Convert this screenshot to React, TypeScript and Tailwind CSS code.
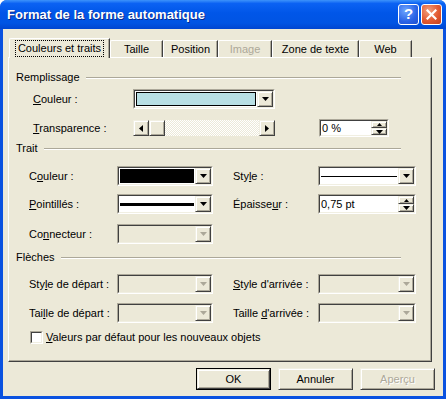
import clsx from 'clsx'
import type { ReactNode } from 'react'

const raised =
  'border border-t-[#f1efe2] border-l-[#f1efe2] border-r-[#404040] border-b-[#404040] shadow-[inset_1px_1px_#ffffff,inset_-1px_-1px_#aca899] bg-[#ece9d8]'

/**
 * Small triangle used on combo, scroll and spin buttons.
 */
function Tri({ dir, disabled = false }: { dir: 'down' | 'up' | 'left' | 'right'; disabled?: boolean }) {
  const fill = disabled ? '#aca899' : '#000000'
  if (dir === 'down')
    return (
      <svg width="7" height="4" viewBox="0 0 7 4">
        <path d="M0 0h7L3.5 4z" fill={fill} />
      </svg>
    )
  if (dir === 'up')
    return (
      <svg width="5" height="3" viewBox="0 0 5 3">
        <path d="M2.5 0L5 3H0z" fill={fill} />
      </svg>
    )
  if (dir === 'left')
    return (
      <svg width="4" height="7" viewBox="0 0 4 7">
        <path d="M4 0v7L0 3.5z" fill={fill} />
      </svg>
    )
  return (
    <svg width="4" height="7" viewBox="0 0 4 7">
      <path d="M0 0v7L4 3.5z" fill={fill} />
    </svg>
  )
}

/**
 * A sunken 3D field (edit, combo).
 */
function Sunken({
  className,
  disabled = false,
  children,
}: {
  className?: string
  disabled?: boolean
  children: ReactNode
}) {
  return (
    <div
      className={clsx(
        'flex border border-t-[#aca899] border-l-[#aca899] border-r-white border-b-white',
        className,
      )}
    >
      <div
        className={clsx(
          'flex min-w-0 flex-1 border border-t-[#404040] border-l-[#404040] border-r-[#f1efe2] border-b-[#f1efe2]',
          disabled ? 'bg-[#ece9d8]' : 'bg-white',
        )}
      >
        {children}
      </div>
    </div>
  )
}

function Combo({
  className,
  disabled = false,
  children,
}: {
  className?: string
  disabled?: boolean
  children?: ReactNode
}) {
  return (
    <Sunken className={className} disabled={disabled}>
      <div className="flex min-w-0 flex-1">{children}</div>
      <div className={clsx('flex w-[16px] items-center justify-center', raised)}>
        <Tri dir="down" disabled={disabled} />
      </div>
    </Sunken>
  )
}

function Spin({ className, value }: { className?: string; value: string }) {
  return (
    <Sunken className={className}>
      <div className="flex flex-1 items-center pl-[1px]">{value}</div>
      <div className="flex w-[16px] flex-col">
        <div className={clsx('flex flex-1 items-center justify-center', raised)}>
          <Tri dir="up" />
        </div>
        <div className={clsx('flex flex-1 items-center justify-center', raised)}>
          <Tri dir="down" />
        </div>
      </div>
    </Sunken>
  )
}

function GroupHeader({ children, className }: { children: ReactNode; className?: string }) {
  return (
    <div className={clsx('ml-[7px] flex h-[13px] w-[385px] items-center', className)}>
      <span>{children}</span>
      <div className="ml-[6px] h-[2px] flex-1 border-t border-b border-t-[#aca899] border-b-white" />
    </div>
  )
}

function Tab({
  children,
  className,
  selected = false,
  disabled = false,
}: {
  children: ReactNode
  className?: string
  selected?: boolean
  disabled?: boolean
}) {
  return (
    <div
      className={clsx(
        'flex items-center justify-center rounded-tl-[2px] border-t border-l border-r border-t-white border-l-white border-r-[#404040] bg-[#ece9d8] shadow-[inset_-1px_0_#aca899]',
        selected ? 'relative z-10 -mb-[1px] h-[20px]' : 'h-[17px]',
        disabled && 'text-[#aca899]',
        className,
      )}
    >
      {children}
    </div>
  )
}

function Button({
  children,
  isDefault = false,
  disabled = false,
}: {
  children: ReactNode
  isDefault?: boolean
  disabled?: boolean
}) {
  return (
    <div
      className={clsx(
        'flex h-[22px] w-[75px] items-center justify-center',
        isDefault ? 'border border-black' : '',
      )}
    >
      <div
        className={clsx(
          'flex h-full w-full items-center justify-center',
          raised,
          disabled && 'text-[#aca899] [text-shadow:1px_1px_#ffffff]',
        )}
      >
        {children}
      </div>
    </div>
  )
}

export default function App() {
  return (
    <div className="flex h-[399px] w-[446px] flex-col overflow-hidden rounded-t-[7px] bg-[#0a52e0] font-['Liberation_Sans',Arial,sans-serif] text-[11px] text-black">
      {/* title bar */}
      <div className="flex h-[29px] shrink-0 items-center bg-[linear-gradient(180deg,#3d93fb_0%,#0b62f3_12%,#0056e8_45%,#0054e3_80%,#0045d0_100%)] pl-[7px] pr-[4px]">
        <span className="flex-1 text-[13px] font-bold text-white [text-shadow:1px_1px_#0a2a8a]">
          Format de la forme automatique
        </span>
        <div className="flex h-[21px] w-[21px] items-center justify-center rounded-[3px] border border-white bg-[radial-gradient(circle_at_35%_30%,#6ea6ff,#2a63e6_60%,#1d4fd0)] text-[15px] font-bold text-white">
          ?
        </div>
        <div className="ml-[2px] flex h-[21px] w-[21px] items-center justify-center rounded-[3px] border border-white bg-[radial-gradient(circle_at_35%_30%,#f2a07e,#e25a32_55%,#c5401e)]">
          <svg width="11" height="11" viewBox="0 0 11 11">
            <path d="M1.5 1.5l8 8M9.5 1.5l-8 8" stroke="#ffffff" strokeWidth="2.2" strokeLinecap="square" />
          </svg>
        </div>
      </div>

      {/* body */}
      <div className="mx-[3px] mb-[3px] flex flex-1 flex-col bg-[#ece9d8] px-[5px] pt-[9px]">
        {/* tabs */}
        <div className="ml-[1px] flex h-[19px] items-end">
          <Tab selected className="w-[101px]">
            <span className="px-[2px] pb-[1px] pt-[1px] outline outline-1 outline-dotted outline-black leading-[13px]">
              Couleurs et traits
            </span>
          </Tab>
          <Tab className="w-[53px]">Taille</Tab>
          <Tab className="w-[55px]">Position</Tab>
          <Tab className="w-[54px]" disabled>
            Image
          </Tab>
          <Tab className="w-[87px]">Zone de texte</Tab>
          <Tab className="w-[53px]">Web</Tab>
        </div>

        {/* panel */}
        <div className="relative z-0 flex h-[305px] w-[424px] flex-col border border-t-white border-l-white border-r-[#404040] border-b-[#404040] shadow-[inset_-1px_-1px_#aca899]">
          <GroupHeader className="mt-[13px]">Remplissage</GroupHeader>

          <div className="mt-[5px] flex h-[20px] items-center pl-[24px]">
            <span className="w-[100px]">
              <u>C</u>ouleur :
            </span>
            <Combo className="h-[20px] w-[142px]">
              <div className="flex flex-1 p-[1px]">
                <div className="flex-1 border border-black bg-[#b8dfe4]" />
              </div>
            </Combo>
          </div>

          <div className="mt-[10px] flex h-[18px] items-center pl-[24px]">
            <span className="w-[100px]">
              <u>T</u>ransparence :
            </span>
            <div className="flex h-[16px] w-[142px]">
              <div className={clsx('flex w-[16px] items-center justify-center', raised)}>
                <Tri dir="left" />
              </div>
              <div className={clsx('w-[16px]', raised)} />
              <div className="flex-1 bg-[repeating-conic-gradient(#ffffff_0_25%,#ece9d8_0_50%)] bg-[length:2px_2px]" />
              <div className={clsx('flex w-[16px] items-center justify-center', raised)}>
                <Tri dir="right" />
              </div>
            </div>
            <Spin className="ml-[44px] h-[18px] w-[70px]" value="0 %" />
          </div>

          <GroupHeader className="mt-[5px]">Trait</GroupHeader>

          <div className="mt-[11px] flex h-[20px] items-center pl-[20px]">
            <span className="w-[88px]">
              C<u>o</u>uleur :
            </span>
            <Combo className="h-[20px] w-[96px]">
              <div className="flex flex-1 p-[1px]">
                <div className="flex-1 border border-black bg-black" />
              </div>
            </Combo>
            <span className="ml-[20px] w-[85px]">
              Sty<u>l</u>e :
            </span>
            <Combo className="h-[20px] w-[98px]">
              <div className="flex flex-1 items-center px-[1px]">
                <div className="h-[1px] flex-1 bg-black" />
              </div>
            </Combo>
          </div>

          <div className="mt-[8px] flex h-[20px] items-center pl-[20px]">
            <span className="w-[88px]">
              <u>P</u>ointillés :
            </span>
            <Combo className="h-[20px] w-[96px]">
              <div className="flex flex-1 items-center px-[1px]">
                <div className="h-[3px] flex-1 bg-black" />
              </div>
            </Combo>
            <span className="ml-[20px] w-[85px]">
              Épaisse<u>u</u>r :
            </span>
            <Spin className="h-[20px] w-[98px]" value="0,75 pt" />
          </div>

          <div className="mt-[10px] flex h-[20px] items-center pl-[20px]">
            <span className="w-[88px]">
              Co<u>n</u>necteur :
            </span>
            <Combo className="h-[20px] w-[96px]" disabled />
          </div>

          <GroupHeader className="mt-[7px]">Flèches</GroupHeader>

          <div className="mt-[10px] flex h-[20px] items-center pl-[20px]">
            <span className="w-[88px]">
              Sty<u>l</u>e de départ :
            </span>
            <Combo className="h-[20px] w-[96px]" disabled />
            <span className="ml-[20px] w-[85px]">
              <u>S</u>tyle d'arrivée :
            </span>
            <Combo className="h-[20px] w-[98px]" disabled />
          </div>

          <div className="mt-[9px] flex h-[20px] items-center pl-[20px]">
            <span className="w-[88px]">
              Tai<u>l</u>le de départ :
            </span>
            <Combo className="h-[20px] w-[96px]" disabled />
            <span className="ml-[20px] w-[85px]">
              Taille <u>d</u>'arrivée :
            </span>
            <Combo className="h-[20px] w-[98px]" disabled />
          </div>

          <div className="mt-[8px] flex h-[13px] items-center pl-[21px]">
            <Sunken className="h-[13px] w-[13px]">
              <span />
            </Sunken>
            <span className="ml-[3px]">
              <u>V</u>aleurs par défaut pour les nouveaux objets
            </span>
          </div>
        </div>

        {/* buttons */}
        <div className="mt-[6px] flex justify-end gap-[7px] pr-[3px]">
          <Button isDefault>OK</Button>
          <Button>Annuler</Button>
          <Button disabled>Aperçu</Button>
        </div>
      </div>
    </div>
  )
}
